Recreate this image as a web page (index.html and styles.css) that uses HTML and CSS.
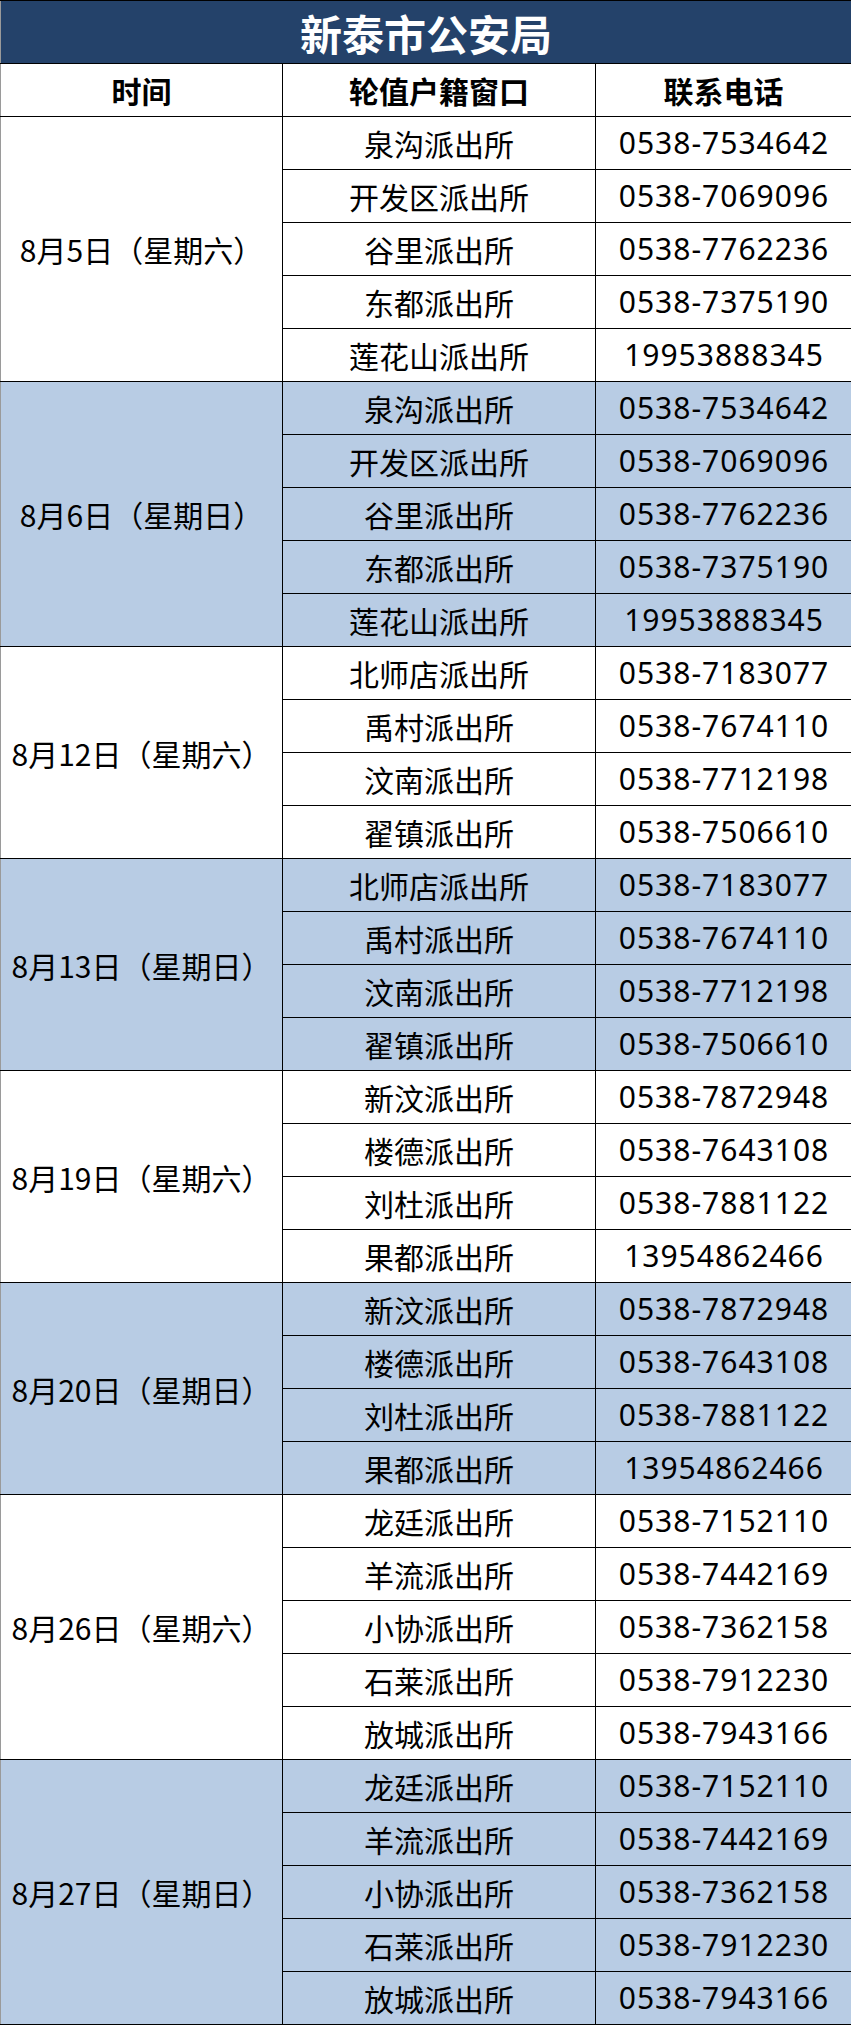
FILE: index.html
```html
<!DOCTYPE html>
<html lang="zh-CN">
<head>
<meta charset="utf-8">
<title>新泰市公安局</title>
<link rel="stylesheet" href="styles.css">
</head>
<body>
<table class="duty">
  <colgroup>
    <col class="c-date">
    <col class="c-office">
    <col class="c-phone">
  </colgroup>
  <thead>
    <tr class="title-row"><th colspan="3" class="title">新泰市公安局</th></tr>
    <tr class="head-row"><th>时间</th><th>轮值户籍窗口</th><th>联系电话</th></tr>
  </thead>
  <tbody class="white">
    <tr><td rowspan="5" class="date">8月5日（星期六）</td><td>泉沟派出所</td><td class="tel">0538-7534642</td></tr>
    <tr><td>开发区派出所</td><td class="tel">0538-7069096</td></tr>
    <tr><td>谷里派出所</td><td class="tel">0538-7762236</td></tr>
    <tr><td>东都派出所</td><td class="tel">0538-7375190</td></tr>
    <tr><td>莲花山派出所</td><td class="tel">19953888345</td></tr>
  </tbody>
  <tbody class="blue">
    <tr><td rowspan="5" class="date">8月6日（星期日）</td><td>泉沟派出所</td><td class="tel">0538-7534642</td></tr>
    <tr><td>开发区派出所</td><td class="tel">0538-7069096</td></tr>
    <tr><td>谷里派出所</td><td class="tel">0538-7762236</td></tr>
    <tr><td>东都派出所</td><td class="tel">0538-7375190</td></tr>
    <tr><td>莲花山派出所</td><td class="tel">19953888345</td></tr>
  </tbody>
  <tbody class="white">
    <tr><td rowspan="4" class="date">8月12日（星期六）</td><td>北师店派出所</td><td class="tel">0538-7183077</td></tr>
    <tr><td>禹村派出所</td><td class="tel">0538-7674110</td></tr>
    <tr><td>汶南派出所</td><td class="tel">0538-7712198</td></tr>
    <tr><td>翟镇派出所</td><td class="tel">0538-7506610</td></tr>
  </tbody>
  <tbody class="blue">
    <tr><td rowspan="4" class="date">8月13日（星期日）</td><td>北师店派出所</td><td class="tel">0538-7183077</td></tr>
    <tr><td>禹村派出所</td><td class="tel">0538-7674110</td></tr>
    <tr><td>汶南派出所</td><td class="tel">0538-7712198</td></tr>
    <tr><td>翟镇派出所</td><td class="tel">0538-7506610</td></tr>
  </tbody>
  <tbody class="white">
    <tr><td rowspan="4" class="date">8月19日（星期六）</td><td>新汶派出所</td><td class="tel">0538-7872948</td></tr>
    <tr><td>楼德派出所</td><td class="tel">0538-7643108</td></tr>
    <tr><td>刘杜派出所</td><td class="tel">0538-7881122</td></tr>
    <tr><td>果都派出所</td><td class="tel">13954862466</td></tr>
  </tbody>
  <tbody class="blue">
    <tr><td rowspan="4" class="date">8月20日（星期日）</td><td>新汶派出所</td><td class="tel">0538-7872948</td></tr>
    <tr><td>楼德派出所</td><td class="tel">0538-7643108</td></tr>
    <tr><td>刘杜派出所</td><td class="tel">0538-7881122</td></tr>
    <tr><td>果都派出所</td><td class="tel">13954862466</td></tr>
  </tbody>
  <tbody class="white">
    <tr><td rowspan="5" class="date">8月26日（星期六）</td><td>龙廷派出所</td><td class="tel">0538-7152110</td></tr>
    <tr><td>羊流派出所</td><td class="tel">0538-7442169</td></tr>
    <tr><td>小协派出所</td><td class="tel">0538-7362158</td></tr>
    <tr><td>石莱派出所</td><td class="tel">0538-7912230</td></tr>
    <tr><td>放城派出所</td><td class="tel">0538-7943166</td></tr>
  </tbody>
  <tbody class="blue">
    <tr><td rowspan="5" class="date">8月27日（星期日）</td><td>龙廷派出所</td><td class="tel">0538-7152110</td></tr>
    <tr><td>羊流派出所</td><td class="tel">0538-7442169</td></tr>
    <tr><td>小协派出所</td><td class="tel">0538-7362158</td></tr>
    <tr><td>石莱派出所</td><td class="tel">0538-7912230</td></tr>
    <tr><td>放城派出所</td><td class="tel">0538-7943166</td></tr>
  </tbody>
</table>
</body>
</html>
```

FILE: styles.css
```css
html, body {
  margin: 0;
  padding: 0;
  background: #ffffff;
}

.duty {
  width: 851px;
  border-collapse: collapse;
  table-layout: fixed;
  font-family: "Noto Sans CJK SC", "Noto Sans", sans-serif;
  color: #000;
}

.c-date { width: 282px; }
.c-office { width: 313px; }
.c-phone { width: 256px; }

.duty th,
.duty td {
  padding: 0;
  text-align: center;
  vertical-align: middle;
  border: 1.5px solid #000;
  box-sizing: border-box;
}

.title-row { height: 63px; }
.title {
  background: #24426a;
  color: #fff;
  font-size: 42px;
  font-weight: 700;
  border-top: none;
  border-left: none;
  border-right: none;
}

.head-row { height: 53px; }
.head-row th {
  font-size: 30px;
  font-weight: 700;
  background: #fff;
}

.duty tbody tr { height: 53px; }
.duty tbody td {
  font-size: 30px;
  font-weight: 400;
  line-height: 1;
}

.duty tbody td.tel {
  font-family: "Noto Sans", "Noto Sans CJK SC", sans-serif;
  letter-spacing: 1px;
  text-indent: 1px;
}

.duty tr > :first-child { border-left: 1px solid #9a9a9a; }
.duty td.date { border-left: 1px solid #9a9a9a; }
.duty tbody tr > td:not(.date):first-child { border-left: 1.5px solid #000; }

.white td { background: #ffffff; }
.blue td { background: #b8cce4; }
```
